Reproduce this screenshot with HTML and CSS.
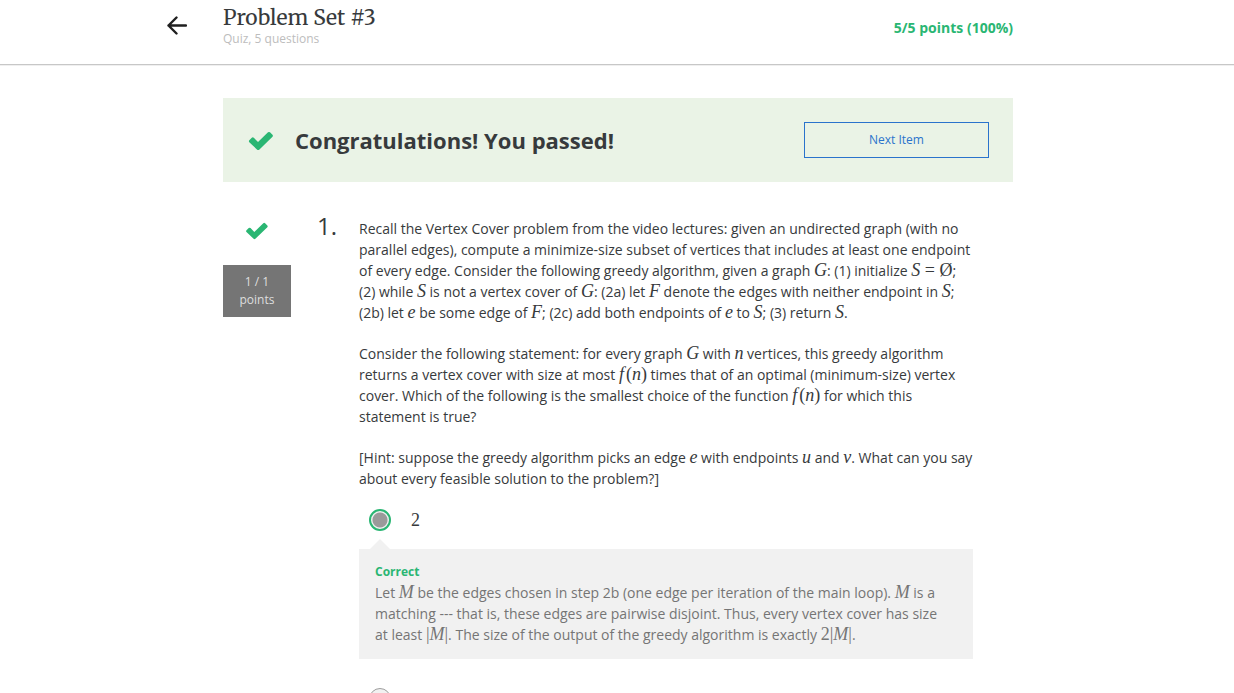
FILE: index.html
```html
<!DOCTYPE html>
<html lang="en">
<head>
<meta charset="utf-8">
<meta name="viewport" content="width=device-width, initial-scale=1">
<title>Problem Set #3</title>
<link rel="stylesheet" href="styles.css">
</head>
<body>
<header class="topbar">
  <div class="topbar-inner">
    <button class="back" type="button" aria-label="Back">
      <svg width="20" height="20" viewBox="0 0 20 20" aria-hidden="true"><path d="M9.500 1.500L1.500 9.500l8 8M1.500 9.500H19" fill="none" stroke="#1f1f1f" stroke-width="2.400" stroke-linecap="round" stroke-linejoin="round"/></svg>
    </button>
    <div class="heading">
      <h1 class="title">Problem Set #3</h1>
      <p class="subtitle">Quiz, 5 questions</p>
    </div>
    <p class="score">5/5 points (100%)</p>
  </div>
</header>
<main class="content">
  <section class="banner">
    <svg class="check" width="26" height="20" viewBox="0 0 26 20" aria-hidden="true"><path d="M1.300 9.200L3.800 6.700Q4.800 6 5.800 6.800L10 11 20 1.300Q21 .5 22 1.300L24.500 3.800Q25.300 4.800 24.500 5.800L11.200 18.700Q10.200 19.500 9.200 18.700L1.300 11.200Q.5 10.200 1.300 9.200Z" fill="#2ab673"/></svg>
    <h2 class="banner-title">Congratulations! You passed!</h2>
    <button class="next" type="button">Next Item</button>
  </section>
  <section class="question">
    <div class="status">
      <svg class="check" width="24" height="18" viewBox="0 0 26 20" aria-hidden="true"><path d="M1.300 9.200L3.800 6.700Q4.800 6 5.800 6.800L10 11 20 1.300Q21 .5 22 1.300L24.500 3.800Q25.300 4.800 24.500 5.800L11.200 18.700Q10.200 19.500 9.200 18.700L1.300 11.200Q.5 10.200 1.300 9.200Z" fill="#2ab673"/></svg>
      <div class="badge">1 / 1<br>points</div>
    </div>
    <div class="number">1.</div>
    <div class="body">
      <div class="prompt">
        <p>Recall the Vertex Cover problem from the video lectures: given an undirected graph (with no parallel edges), compute a minimize-size subset of vertices that includes at least one endpoint of every edge. Consider the following greedy algorithm, given a graph <i class="math">G</i>: (1) initialize <span class="math"><i>S</i> = Ø</span>; (2) while <i class="math">S</i> is not a vertex cover of <i class="math">G</i>: (2a) let <i class="math">F</i> denote the edges with neither endpoint in <i class="math">S</i>; (2b) let <i class="math">e</i> be some edge of <i class="math">F</i>; (2c) add both endpoints of <i class="math">e</i> to <i class="math">S</i>; (3) return <i class="math">S</i>.</p>
        <p>Consider the following statement: for every graph <i class="math">G</i> with <i class="math">n</i> vertices, this greedy algorithm returns a vertex cover with size at most <span class="math"><i class="fn">f</i>(<i>n</i>)</span> times that of an optimal (minimum-size) vertex cover. Which of the following is the smallest choice of the function <span class="math"><i class="fn">f</i>(<i>n</i>)</span> for which this statement is true?</p>
        <p>[Hint: suppose the greedy algorithm picks an edge <i class="math">e</i> with endpoints <i class="math">u</i> and <i class="math">v</i>. What can you say about every feasible solution to the problem?]</p>
      </div>
      <label class="option"><input class="radio correct" type="radio" name="answer" checked><span class="math">2</span></label>
      <div class="feedback">
        <strong class="verdict">Correct</strong>
        <p>Let <i class="math">M</i> be the edges chosen in step 2b (one edge per iteration of the main loop). <i class="math">M</i> is a matching --- that is, these edges are pairwise disjoint. Thus, every vertex cover has size at least <span class="math">|<i>M</i>|</span>. The size of the output of the greedy algorithm is exactly <span class="math">2|<i>M</i>|</span>.</p>
      </div>
      <div class="option"><input class="radio" type="radio" name="answer" aria-label="Second answer"></div>
    </div>
  </section>
</main>
</body>
</html>
```
FILE: styles.css
```css
* { box-sizing: border-box; }

body {
  margin: 0;
  background: #fff;
  color: #373a3c;
  font: 14px/21px "Open Sans", "Noto Sans", sans-serif;
}

h1, h2, p { margin: 0; }

button { font-family: inherit; background: none; cursor: pointer; }

.topbar {
  border-bottom: 1px solid #c7c7c7;
  box-shadow: 0 1px 0 #efefef;
}

.topbar-inner {
  display: flex;
  align-items: flex-start;
  max-width: 902px;
  min-height: 64px;
  margin: 0 auto;
  padding: 4px 55px 16px 1px;
}

.back {
  flex: none;
  display: flex;
  margin: 12px 36px 0 0;
  padding: 0;
  border: 0;
}

.heading { flex: 1; }

.title {
  font: 400 21px/28px "Merriweather Light", Merriweather, "DejaVu Serif Condensed", "DejaVu Serif", serif;
}

.subtitle { color: #bdbdbd; font-size: 12px; line-height: 14px; }

.score { margin-top: 13px; color: #2ab673; font-weight: 700; }

.content {
  max-width: 792px;
  margin: 0 auto;
  padding: 33px 0 0 2px;
}

.banner {
  display: flex;
  align-items: center;
  padding: 24px 24px 24px 25px;
  background: #eaf3e6;
}

.check { flex: none; display: block; margin-top: 1px; }

.banner-title {
  flex: 1;
  margin-left: 21px;
  font-size: 22px;
  line-height: 32px;
}

.next {
  width: 185px;
  height: 36px;
  padding: 0 0 2px;
  border: 1px solid #2a73cc;
  color: #2a73cc;
  font-size: 12px;
}

.question {
  display: grid;
  grid-template-columns: 68px 68px 1fr;
  padding: 36px 40px 0 0;
}

.status {
  display: flex;
  flex-direction: column;
  align-items: center;
  gap: 25px;
  padding-top: 3px;
}

.badge {
  width: 100%;
  padding: 8px 0;
  background: #757575;
  color: #dedede;
  font-size: 12px;
  line-height: 18px;
  text-align: center;
}

.number {
  padding-right: 22px;
  font-size: 24px;
  line-height: 16px;
  text-align: right;
}

.prompt {
  display: flex;
  flex-direction: column;
  gap: 20px;
}

.math {
  font-family: "Liberation Serif", "Times New Roman", serif;
  font-size: 18px;
  line-height: 18px;
  white-space: nowrap;
}

.fn { margin-right: 2px; }

.option {
  display: flex;
  align-items: center;
  gap: 20px;
  min-height: 22px;
  margin-top: 20px;
  padding-left: 10px;
}

.radio {
  appearance: none;
  width: 22px;
  height: 22px;
  margin: 0;
  border: 1px solid #9e9e9e;
  border-radius: 50%;
  background: #f1f1f1;
}

.radio.correct { border: 2px solid #2ab673; }

.radio:checked { background: radial-gradient(circle, #9a9a9a 7px, #f1f1f1 8px); }

.feedback {
  position: relative;
  margin: 18px 0 29px;
  padding: 12px 24px 14px 16px;
  background: #f1f1f1;
  color: #757575;
}

.feedback::before {
  content: "";
  position: absolute;
  top: -10px;
  left: 11px;
  border: solid transparent;
  border-width: 0 10px 10px;
  border-bottom-color: #f1f1f1;
}

.feedback + .option { margin-top: 0; }

.verdict { display: block; color: #2ab673; font-size: 12px; }
```
